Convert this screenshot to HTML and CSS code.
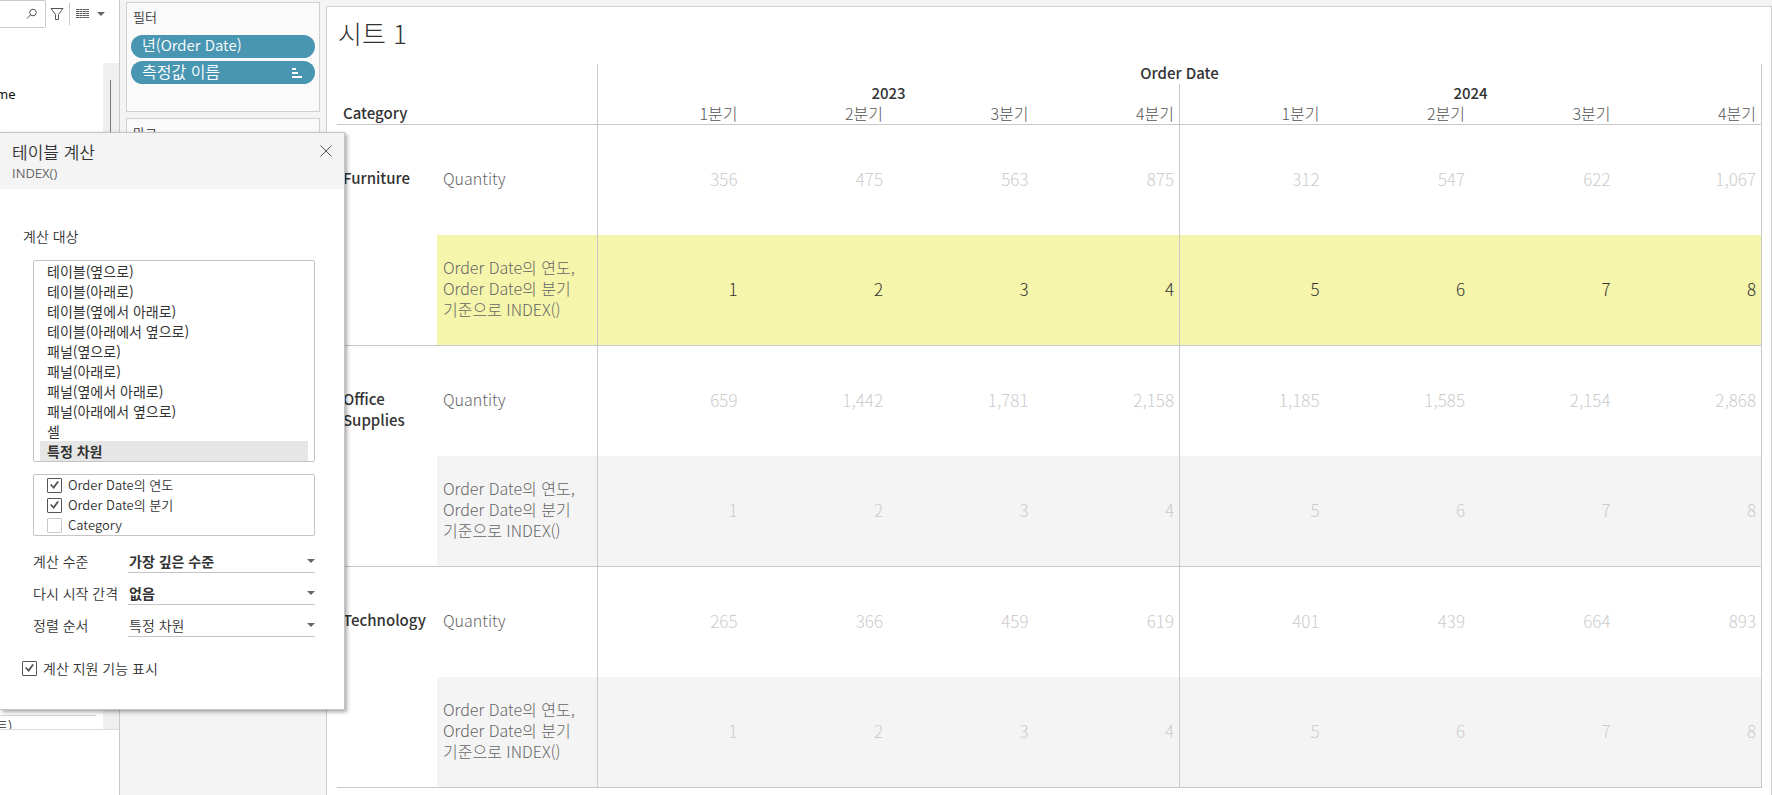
FILE: index.html
```html
<!DOCTYPE html>
<html lang="ko">
<head>
<meta charset="utf-8">
<title>시트 1</title>
<link rel="stylesheet" href="styles.css">
</head>
<body>
<div class="workbook">
  <aside class="data-pane">
    <div class="toolbar">
      <div class="search">
        <input class="search-input" type="text" aria-label="검색">
        <svg class="search-icon" width="12" height="12" viewBox="0 0 12 12"><circle cx="7" cy="4.5" r="3.3"/><path d="M4.6 6.9 1 10.5"/></svg>
      </div>
      <button class="tool" aria-label="필터"><svg width="14" height="14" viewBox="0 0 14 14"><path d="M1 1.5H13L8.5 7.5V12.5H5.5V7.5Z"/></svg></button>
      <span class="tool-divider"></span>
      <button class="tool tool-view" aria-label="보기">
        <svg width="13" height="11" viewBox="0 0 13 11"><path class="dash" d="M0 .5H13M0 2.5H13M0 4.5H13M0 6.5H13M0 8.5H13"/></svg>
        <svg class="caret" width="8" height="4" viewBox="0 0 8 4"><path d="M0 0H8L4 4Z"/></svg>
      </button>
    </div>
    <div class="field-area">
      <div class="fields">
        <div class="field field-name">me</div>
        <div class="field field-cut">트)</div>
      </div>
      <div class="scrollbar"><span class="thumb"></span></div>
    </div>
    <div class="data-foot"></div>
  </aside>

  <section class="shelves">
    <div class="card filters">
      <h2 class="card-title">필터</h2>
      <button class="pill pill-date">년(Order Date)</button>
      <button class="pill">측정값 이름
        <svg width="10" height="10" viewBox="0 0 10 10"><path d="M0 0H4V2H0ZM0 4H6V6H0ZM0 8H10V10H0Z"/></svg>
      </button>
    </div>
    <div class="card marks"><h2 class="card-title">마크</h2></div>
  </section>

  <main class="sheet">
    <h1 class="sheet-title">시트 1</h1>
    <table class="crosstab">
      <colgroup><col class="col-category"><col class="col-measure"><col span="8"></colgroup>
      <thead>
        <tr><th colspan="2" class="stub"></th><th colspan="8" class="edge">Order Date</th></tr>
        <tr><th colspan="2" class="stub"></th><th colspan="4" class="edge">2023</th><th colspan="4" class="edge">2024</th></tr>
        <tr class="quarters"><th class="head-category">Category</th><th class="edge"></th><th>1분기</th><th>2분기</th><th>3분기</th><th class="edge">4분기</th><th>1분기</th><th>2분기</th><th>3분기</th><th class="edge">4분기</th></tr>
      </thead>
      <tbody>
        <tr><th rowspan="2" class="category">Furniture</th><th class="measure edge">Quantity</th><td>356</td><td>475</td><td>563</td><td class="edge">875</td><td>312</td><td>547</td><td>622</td><td class="edge">1,067</td></tr>
        <tr class="index active"><th class="measure edge">Order Date의 연도, Order Date의 분기 기준으로 INDEX()</th><td>1</td><td>2</td><td>3</td><td class="edge">4</td><td>5</td><td>6</td><td>7</td><td class="edge">8</td></tr>
      </tbody>
      <tbody>
        <tr><th rowspan="2" class="category">Office Supplies</th><th class="measure edge">Quantity</th><td>659</td><td>1,442</td><td>1,781</td><td class="edge">2,158</td><td>1,185</td><td>1,585</td><td>2,154</td><td class="edge">2,868</td></tr>
        <tr class="index"><th class="measure edge">Order Date의 연도, Order Date의 분기 기준으로 INDEX()</th><td>1</td><td>2</td><td>3</td><td class="edge">4</td><td>5</td><td>6</td><td>7</td><td class="edge">8</td></tr>
      </tbody>
      <tbody>
        <tr><th rowspan="2" class="category">Technology</th><th class="measure edge">Quantity</th><td>265</td><td>366</td><td>459</td><td class="edge">619</td><td>401</td><td>439</td><td>664</td><td class="edge">893</td></tr>
        <tr class="index"><th class="measure edge">Order Date의 연도, Order Date의 분기 기준으로 INDEX()</th><td>1</td><td>2</td><td>3</td><td class="edge">4</td><td>5</td><td>6</td><td>7</td><td class="edge">8</td></tr>
      </tbody>
    </table>
  </main>
</div>

<div class="dialog" role="dialog" aria-labelledby="dialog-title">
  <header class="dialog-head">
    <div>
      <h2 class="dialog-title" id="dialog-title">테이블 계산</h2>
      <p class="dialog-formula">INDEX()</p>
    </div>
    <button class="close" aria-label="닫기"><svg width="12" height="12" viewBox="0 0 12 12"><path d="M.5.5 11.5 11.5M11.5.5.5 11.5"/></svg></button>
  </header>
  <form class="dialog-body">
    <label class="group-label" for="compute">계산 대상</label>
    <select class="listbox" id="compute" size="10">
      <option>테이블(옆으로)</option>
      <option>테이블(아래로)</option>
      <option>테이블(옆에서 아래로)</option>
      <option>테이블(아래에서 옆으로)</option>
      <option>패널(옆으로)</option>
      <option>패널(아래로)</option>
      <option>패널(옆에서 아래로)</option>
      <option>패널(아래에서 옆으로)</option>
      <option>셀</option>
      <option selected>특정 차원</option>
    </select>
    <div class="dimensions">
      <label class="check"><input type="checkbox" checked>Order Date의 연도</label>
      <label class="check"><input type="checkbox" checked>Order Date의 분기</label>
      <label class="check"><input type="checkbox">Category</label>
    </div>
    <div class="options">
      <label for="level">계산 수준</label>
      <div class="combo"><select class="strong" id="level"><option>가장 깊은 수준</option></select><svg class="caret" width="8" height="4" viewBox="0 0 8 4"><path d="M0 0H8L4 4Z"/></svg></div>
      <label for="restart">다시 시작 간격</label>
      <div class="combo"><select class="strong" id="restart"><option>없음</option></select><svg class="caret" width="8" height="4" viewBox="0 0 8 4"><path d="M0 0H8L4 4Z"/></svg></div>
      <label for="order">정렬 순서</label>
      <div class="combo"><select id="order"><option>특정 차원</option></select><svg class="caret" width="8" height="4" viewBox="0 0 8 4"><path d="M0 0H8L4 4Z"/></svg></div>
    </div>
    <label class="check assist"><input type="checkbox" checked>계산 지원 기능 표시</label>
  </form>
</div>
</body>
</html>
```
FILE: styles.css
```css
* { box-sizing: border-box; }

body {
  margin: 0;
  background: #f4f4f4;
  color: #333;
  font: 350 14px/20px "Noto Sans CJK KR", sans-serif;
}

h1, h2, p { margin: 0; font-weight: inherit; }

button, input, select {
  margin: 0;
  padding: 0;
  border: 0;
  background: none;
  color: inherit;
  font: inherit;
}

svg { display: block; fill: none; stroke: #555; }
.caret { fill: #666; stroke: none; }

.workbook { display: flex; min-height: 100vh; }

/* Data pane */
.data-pane {
  display: flex;
  flex-direction: column;
  flex: 0 0 120px;
  border-right: 1px solid #c9c9c9;
  background: #fff;
}
.toolbar { display: flex; align-items: center; height: 28px; }
.search {
  display: flex;
  align-items: center;
  width: 46px;
  height: 28px;
  padding-right: 7px;
  border: 1px solid #c9c9c9;
  border-left: 0;
  border-radius: 0 2px 2px 0;
}
.search-input { flex: 1; min-width: 0; }
.search-icon { flex: none; }
.tool { margin-left: 4px; }
.tool-divider { width: 1px; height: 22px; margin-left: 5px; background: #c9c9c9; }
.tool-view { display: flex; align-items: center; gap: 8px; margin-left: 6px; }
.dash { stroke-dasharray: 3 .4; }
.field-area { display: flex; height: 666px; margin-top: 35px; }
.fields {
  display: flex;
  flex-direction: column;
  justify-content: space-between;
  flex: 1;
  overflow: hidden;
}
.field { text-indent: -4px; font-size: 13px; }
.field-name { padding-top: 21px; color: #111; font-family: "Noto Sans", sans-serif; font-weight: 400; }
.field-cut { height: 14px; margin-right: 7px; border-top: 1px solid #d4d4d4; }
.scrollbar { width: 16px; padding: 17px 7px 0; background: #efefef; }
.thumb { display: block; width: 1px; height: 420px; background: #777; }
.data-foot { flex: 1; border-top: 1px solid #dcdcdc; }

/* Shelves */
.shelves {
  display: flex;
  flex-direction: column;
  gap: 6px;
  flex: 0 0 206px;
  padding: 2px 6px 0;
}
.card {
  display: flex;
  flex-direction: column;
  gap: 3px;
  padding: 4px;
  border: 1px solid #d0d0d0;
  background: #fafafa;
}
.filters { height: 110px; }
.marks { height: 300px; }
.card-title { padding: 0 2px 5px; font-size: 13px; line-height: 20px; }
.pill {
  display: flex;
  align-items: center;
  justify-content: space-between;
  height: 23px;
  padding: 0 13px 3px 11px;
  border-radius: 12px;
  background: #4996b2;
  color: #fff;
  font-size: 16px;
  line-height: 20px;
}
.pill-date { font-size: 15px; }
.pill svg { margin-top: 3px; fill: #fff; stroke: none; }

/* Sheet */
.sheet {
  flex: 1;
  margin-top: 6px;
  padding: 10px 9px 0 10px;
  border: 1px solid #d0d0d0;
  border-bottom: 0;
  background: #fff;
}
.sheet-title { padding-left: 1px; font-size: 26px; font-weight: 300; line-height: 32px; }
.crosstab {
  width: 100%;
  margin-top: 15px;
  border-collapse: separate;
  border-spacing: 0;
  table-layout: fixed;
  font-size: 16px;
  font-weight: 300;
}
.col-category { width: 100px; }
.col-measure { width: 161px; }
.crosstab th, .crosstab td { padding: 0; font-weight: 300; }
.crosstab thead th { height: 20px; padding-bottom: 2px; font-size: 15px; font-weight: 500; line-height: 18px; }
.crosstab .edge, .crosstab .stub { border-right: 1px solid #c9c9c9; }
.crosstab .quarters th {
  height: 21px;
  padding-right: 6px;
  border-bottom: 1px solid #c9c9c9;
  color: #555;
  font-size: 16px;
  font-weight: 300;
  text-align: right;
}
.crosstab .quarters .edge { padding-right: 5px; }
.crosstab .quarters .head-category {
  padding-left: 6px;
  color: #333;
  font-size: 15px;
  font-weight: 500;
  text-align: left;
}
.crosstab td { height: 110px; padding: 0 6px 3px 0; color: #ccc; font-size: 17px; text-align: right; }
.crosstab td.edge { padding-right: 5px; }
.crosstab .category {
  padding: 42px 6px 0;
  border-bottom: 1px solid #c9c9c9;
  font-size: 15px;
  font-weight: 500;
  line-height: 21px;
  text-align: left;
  vertical-align: top;
}
.crosstab .measure { padding: 0 20px 3px 6px; color: #666; line-height: 21px; text-align: left; }
.index > * { background: #f4f4f4; border-bottom: 1px solid #c9c9c9; }
.crosstab .index > * { height: 111px; }
.active > * { background: #f5f5ab; }
.crosstab .active td { color: #333; }

/* Table calculation dialog */
.dialog {
  position: absolute;
  top: 132px;
  left: 0;
  width: 345px;
  border: 1px solid #c4c4c4;
  border-left: 0;
  background: #fff;
  box-shadow: 2px 2px 4px rgba(0, 0, 0, .35);
}
.dialog-head {
  display: flex;
  align-items: flex-start;
  justify-content: space-between;
  height: 56px;
  padding: 7px 12px 0;
  background: #f4f4f4;
}
.dialog-title { font-size: 17px; line-height: 24px; }
.dialog-formula { color: #666; font: 13px/18px "Open Sans", sans-serif; }
.close { padding-top: 5px; }
.dialog-body { display: flex; flex-direction: column; padding: 37px 29px 31px 33px; }
.group-label { margin: 0 0 14px -10px; }
.listbox {
  padding: 0 6px;
  border: 1px solid #c4c4c4;
  border-radius: 2px;
  outline: 0;
  overflow: hidden;
}
.listbox option { height: 20px; min-height: 20px; padding: 0 7px 2px; line-height: 18px; }
.listbox option:checked { background: linear-gradient(#e6e6e6, #e6e6e6); color: #333; font-weight: 700; }
.dimensions {
  margin-top: 12px;
  padding: 0 13px;
  border: 1px solid #c4c4c4;
  border-radius: 2px;
  font-size: 13px;
}
.check { display: flex; align-items: center; gap: 6px; height: 20px; }
.check input {
  appearance: none;
  display: grid;
  place-items: center;
  width: 15px;
  height: 15px;
  border: 1px solid #c9c9c9;
  border-radius: 1px;
  background: #fff;
}
.check input:checked { border-color: #555; }
.check input:checked::before {
  content: "";
  width: 9px;
  height: 8px;
  background: #555;
  clip-path: polygon(0 50%, 15% 38%, 38% 66%, 82% 0, 100% 10%, 42% 100%);
}
.options {
  display: grid;
  grid-template-columns: 95px 1fr;
  row-gap: 8px;
  margin-top: 13px;
  line-height: 24px;
}
.combo { display: flex; align-items: center; height: 24px; border-bottom: 1px solid #c4c4c4; }
.combo select { flex: 1; appearance: none; padding-left: 1px; line-height: 22px; }
.combo .strong { font-weight: 700; }
.assist { margin: 21px 0 0 -11px; }
```
